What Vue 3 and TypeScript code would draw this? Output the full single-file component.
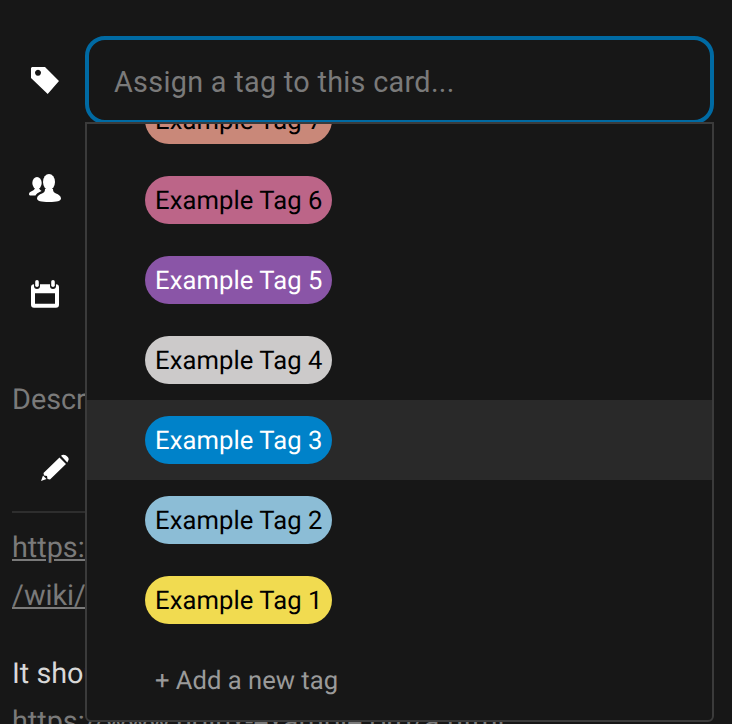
<script setup lang="ts">
import { ref } from 'vue'

interface Tag {
  name: string
  color: string
  text: string
  active?: boolean
}

const query = ref('')

const tags: Tag[] = [
  { name: 'Example Tag 7', color: '#c98879', text: '#000' },
  { name: 'Example Tag 6', color: '#bc6588', text: '#000' },
  { name: 'Example Tag 5', color: '#8a55a7', text: '#fff' },
  { name: 'Example Tag 4', color: '#cccaca', text: '#000' },
  { name: 'Example Tag 3', color: '#0082c9', text: '#fff', active: true },
  { name: 'Example Tag 2', color: '#8cbdd6', text: '#000' },
  { name: 'Example Tag 1', color: '#f1db50', text: '#000' }
]
</script>

<template>
  <div class="page">
    <div class="form-row">
      <div class="icon-col">
        <svg width="32" height="32" viewBox="0 0 32 32">
          <path fill="#fff" fill-rule="evenodd" d="M3 3H16L30 17 18.700 30 2 14V4ZM9 5.700a3 3 0 1 0 .01 0Z" />
        </svg>
      </div>
      <div class="field">
        <input v-model="query" class="tag-input" placeholder="Assign a tag to this card..." />
        <div class="dropdown">
          <div class="tag-list">
            <div v-for="tag in tags" :key="tag.name" class="tag-option" :class="{ active: tag.active }">
              <span class="tag" :style="{ background: tag.color, color: tag.text }">{{ tag.name }}</span>
            </div>
            <div class="add-tag">+ Add a new tag</div>
          </div>
        </div>
      </div>
    </div>

    <div class="form-row">
      <div class="icon-col">
        <svg width="32" height="32" viewBox="0 0 32 32">
          <ellipse cx="20" cy="10" rx="6" ry="8" fill="#fff" />
          <path fill="#fff" d="M8 26.500C8 24 10.500 22.500 13 21.500 15 20.700 16 19.500 16 17H24C24 19.500 25 20.700 27 21.500 29.500 22.500 32 24 32 26.500 32 29 28 30 20 30S8 29 8 26.500Z" />
          <ellipse cx="8" cy="11" rx="4.700" ry="6" fill="#fff" />
          <path fill="#fff" d="M0 22C0 20 2 19.500 4 18.500 5 18 6 17 6 15H10C10 17 11 17.700 12 18.500L12.500 19C9 20.500 7 22 6.500 23.500H2C.7 23.500 0 23 0 22Z" />
        </svg>
      </div>
      <div class="field-stub"></div>
    </div>

    <div class="form-row">
      <div class="icon-col">
        <svg width="32" height="32" viewBox="0 0 32 32">
          <path fill="#fff" fill-rule="evenodd" d="M5 5.300H27C29 5.300 30 6.300 30 8.300V25.700C30 27.700 29 28.700 27 28.700H5C3 28.700 2 27.700 2 25.700V8.300C2 6.300 3 5.300 5 5.300ZM6 14.300V24.700H26V14.300Z" />
          <rect x="5" y="1" width="6" height="9" rx="3" fill="#171717" />
          <rect x="21" y="1" width="6" height="9" rx="3" fill="#171717" />
          <rect x="6.200" y="1" width="3.600" height="7" rx="1.800" fill="#fff" />
          <rect x="22.200" y="1" width="3.600" height="7" rx="1.800" fill="#fff" />
        </svg>
      </div>
      <div class="field-stub"></div>
    </div>

    <div class="description">
      <div class="desc-label">Description</div>
      <div class="desc-toolbar">
        <svg width="32" height="32" viewBox="0 0 32 32">
          <path fill="#fff" d="M20.500 6.500 27 13 11 28.500 8.500 28 8 25 5 24.500 4.500 22Z" />
          <path fill="#fff" d="M22 4.800C25 1.500 31 6.500 29.500 9L28.300 11.500Z" />
          <path fill="#fff" d="M4 24.500 7.500 28 2 30Z" />
        </svg>
      </div>
      <div class="desc-body">
        <a class="desc-link">https://en.wikipedia.org</a>
        <a class="desc-link">/wiki/Example_page</a>
        <p class="desc-text">It should be linked here:</p>
        <a class="desc-link">https://www.nginx-example.org/a.html</a>
      </div>
    </div>
  </div>
</template>

<style scoped>
.page {
  width: 732px;
  height: 724px;
  overflow: hidden;
  box-sizing: border-box;
  padding: 36px 18px 0 12px;
  background: #171717;
  font-family: Roboto, "Liberation Sans", sans-serif;
  font-size: 25.6px;
  text-rendering: geometricPrecision;
}

.form-row {
  display: flex;
  height: 88px;
  margin-bottom: 20px;
}

.form-row:nth-child(2) {
  margin-bottom: 19px;
}

.form-row:nth-child(3) {
  margin-bottom: 0;
}

.icon-col {
  flex: 0 0 73px;
  height: 88px;
  padding-left: 17px;
  box-sizing: border-box;
  display: flex;
  align-items: center;
}

.field {
  position: relative;
  flex: 1;
}

.field-stub {
  flex: 1;
}

.tag-input {
  display: block;
  width: 100%;
  height: 88px;
  box-sizing: border-box;
  padding: 3px 25px 0;
  background: #171717;
  border: 4px solid #006aa3;
  border-radius: 20px;
  outline: none;
  color: #d8d8d8;
  font: inherit;
  font-size: 28.8px;
  letter-spacing: 0.3px;
}

.tag-input::placeholder {
  color: #7a7a7a;
  opacity: 1;
}

.dropdown {
  position: absolute;
  z-index: 2;
  top: 86px;
  left: 0;
  right: 0;
  height: 600px;
  box-sizing: border-box;
  border: 2px solid #3b3b3b;
  border-radius: 0 0 6px 6px;
  background: #171717;
  overflow: hidden;
}

.tag-list {
  margin-top: -44px;
}

.tag-option {
  display: flex;
  align-items: center;
  height: 80px;
  padding-left: 58px;
}

.tag-option.active {
  background: #292929;
}

.tag {
  display: block;
  width: 187px;
  box-sizing: border-box;
  height: 48px;
  line-height: 50px;
  padding: 0 10px;
  border-radius: 24px;
  letter-spacing: 0.08px;
  white-space: nowrap;
}

.add-tag {
  height: 80px;
  line-height: 82px;
  padding-left: 68px;
  color: #9a9a9a;
}

.description {
  margin-top: 38px;
}

.desc-label {
  height: 46px;
  line-height: 46px;
  font-size: 28.8px;
  color: #7a7a7a;
}

.desc-toolbar {
  height: 90px;
  box-sizing: border-box;
  padding: 28px 0 0 27px;
  border-bottom: 2px solid #2e2e2e;
}

.desc-body {
  padding-top: 11px;
  color: #d8d8d8;
  font-size: 28.8px;
}

.desc-link {
  display: table;
  line-height: 48px;
  color: #7a7a7a;
  text-decoration: underline;
}

.desc-text {
  margin: 30px 0 0;
  line-height: 48px;
}
</style>

<style>
html,
body {
  background: #171717;
}
</style>
